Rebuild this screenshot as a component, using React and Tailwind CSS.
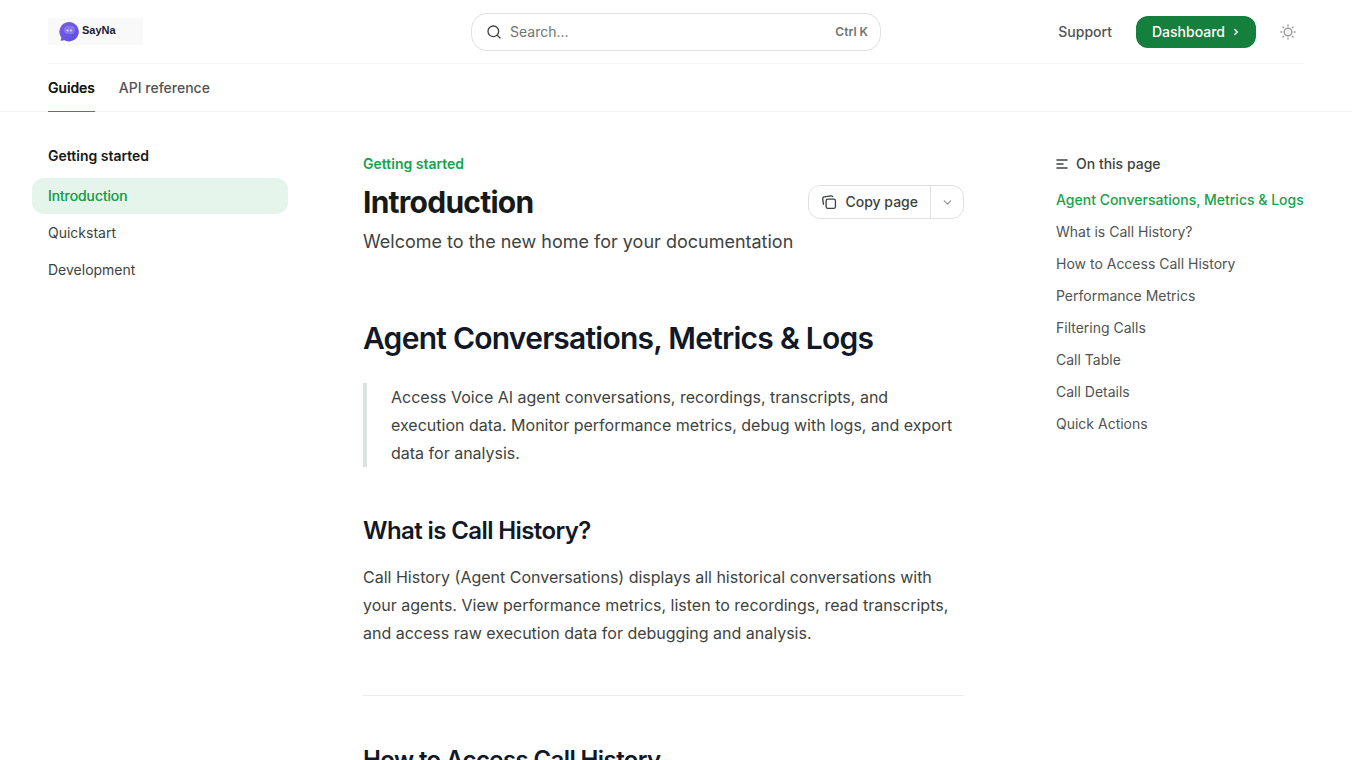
import { Search, ChevronDown } from "lucide-react";

const tabs = ["Guides", "API reference"];

const pages = ["Introduction", "Quickstart", "Development"];

const sections = [
  "Agent Conversations, Metrics & Logs",
  "What is Call History?",
  "How to Access Call History",
  "Performance Metrics",
  "Filtering Calls",
  "Call Table",
  "Call Details",
  "Quick Actions",
];

export default function App() {
  return (
    <div className="min-h-screen bg-white font-['Inter',sans-serif] text-[#3e4340]">
      <Header />

      <div className="flex px-12">
        <Sidebar />
        <Article />
        <OnThisPage />
      </div>
    </div>
  );
}

/* top bar + tabs */
function Header() {
  return (
    <header className="border-b border-[#f2f3f2] px-12">
      <div className="flex h-16 items-center border-b border-[#f4f5f4]">
        <div className="flex-1">
          <a href="/" className="inline-block align-middle">
            <Logo />
          </a>
        </div>

        <div className="flex h-[38px] w-[410px] items-center gap-2 rounded-2xl border border-[#dfe0df] pr-3 pl-[14px]">
          <Search className="size-4 text-[#3e4340]" aria-hidden="true" />
          <input
            type="text"
            aria-label="Search"
            placeholder="Search..."
            className="min-w-0 flex-1 text-sm outline-none placeholder:text-[#707472]"
          />
          <kbd className="font-['Inter',sans-serif] text-xs font-semibold text-[#707472]">
            Ctrl K
          </kbd>
        </div>

        <div className="flex flex-1 items-center justify-end gap-6">
          <a href="/support" className="text-sm font-medium text-[#505351]">
            Support
          </a>
          <a
            href="/dashboard"
            className="flex h-8 items-center gap-[7px] rounded-xl bg-[#15803d] px-4 text-sm font-medium text-white"
          >
            Dashboard
            <svg
              width="8"
              height="8"
              viewBox="0 0 8 8"
              fill="none"
              stroke="currentColor"
              strokeWidth="1.4"
              strokeLinecap="round"
              strokeLinejoin="round"
              aria-hidden="true"
            >
              <path d="M2.700 1.400 5.300 4 2.700 6.600" />
            </svg>
          </a>
          <button type="button" aria-label="Toggle dark mode" className="pr-2">
            <SunIcon />
          </button>
        </div>
      </div>

      <nav className="-mb-px flex h-12 gap-6 text-sm font-medium">
        {tabs.map((tab, i) => (
          <a
            key={tab}
            href="#"
            className={
              i === 0
                ? "flex items-center border-b border-b-[#16a34a] text-[#171a18] [text-shadow:0_0_0_currentColor]"
                : "flex items-center border-b border-b-transparent text-[#505351]"
            }
          >
            {tab}
          </a>
        ))}
      </nav>
    </header>
  );
}

function Sidebar() {
  return (
    <nav className="w-60 shrink-0 pt-[34px] text-sm">
      <h5 className="leading-5 font-semibold text-[#171a18]">
        Getting started
      </h5>
      <ul className="mt-3 -ml-4 space-y-px">
        {pages.map((page, i) => (
          <li key={page}>
            <a
              href="#"
              className={
                i === 0
                  ? "block rounded-xl bg-[#e6f5eb] px-4 py-2 text-[#16a34a] [text-shadow:0_0_0_currentColor]"
                  : "block rounded-xl px-4 py-2"
              }
            >
              {page}
            </a>
          </li>
        ))}
      </ul>
    </nav>
  );
}

function Article() {
  return (
    <main className="mr-[92px] ml-[75px] min-w-0 flex-1 pt-[42px] pb-16">
      <p className="text-sm font-semibold text-[#16a34a]">Getting started</p>
      <div className="mt-2.5 flex items-center">
        <h1 className="flex-1 text-3xl font-bold tracking-tight text-[#171a18]">
          Introduction
        </h1>
        <CopyPage />
      </div>
      <p className="mt-2 text-lg">
        Welcome to the new home for your documentation
      </p>

      <h1 className="mt-16 text-3xl font-semibold tracking-tight text-[#111827]">
        Agent Conversations, Metrics & Logs
      </h1>
      <blockquote className="mt-[27px] border-l-4 border-[#dce2df] pl-6 leading-7">
        Access Voice AI agent conversations, recordings, transcripts, and
        execution data. Monitor performance metrics, debug with logs, and export
        data for analysis.
      </blockquote>

      <h2 className="mt-12 text-2xl font-semibold tracking-tight text-[#111827]">
        What is Call History?
      </h2>
      <p className="mt-4 leading-7">
        Call History (Agent Conversations) displays all historical conversations
        with your agents. View performance metrics, listen to recordings, read
        transcripts, and access raw execution data for debugging and analysis.
      </p>

      <hr className="my-12 border-[#ebeceb]" />

      <h2 className="text-2xl font-semibold tracking-tight text-[#111827]">
        How to Access Call History
      </h2>
    </main>
  );
}

function CopyPage() {
  return (
    <div className="flex h-[34px] rounded-xl border border-[#dfe0df] text-sm font-medium">
      <button type="button" className="flex items-center gap-2 px-3">
        <CopyIcon />
        Copy page
      </button>
      <button
        type="button"
        aria-label="More actions"
        className="flex w-[33px] items-center justify-center border-l border-[#dfe0df]"
      >
        <ChevronDown className="size-[13px] text-[#8b8f8c]" />
      </button>
    </div>
  );
}

function OnThisPage() {
  return (
    <aside className="w-[248px] shrink-0 pt-[42px] text-sm">
      <h2 className="flex items-center gap-2 font-medium">
        <svg width="12" height="12" viewBox="0 0 12 12" aria-hidden="true">
          <path
            d="M1 2h10M1 6h6M1 10h10"
            stroke="currentColor"
            strokeWidth="1.5"
            strokeLinecap="round"
          />
        </svg>
        On this page
      </h2>
      <ul className="mt-4 space-y-3 whitespace-nowrap">
        {sections.map((section, i) => (
          <li key={section}>
            <a
              href="#"
              className={
                i === 0 ? "font-medium text-[#16a34a]" : "text-[#505351]"
              }
            >
              {section}
            </a>
          </li>
        ))}
      </ul>
    </aside>
  );
}

/* icons */

function Logo() {
  return (
    <svg
      width="95"
      height="27"
      viewBox="0 0 95 27"
      role="img"
      aria-label="SayNa"
    >
      <defs>
        <linearGradient id="bubble" x1="0" y1="0" x2="1" y2="1">
          <stop offset="0" stopColor="#7c5ce6" />
          <stop offset="1" stopColor="#5b50dc" />
        </linearGradient>
      </defs>
      <rect width="95" height="27" fill="#f9f9fa" />
      <path
        d="M21 4a9.700 9.700 0 1 1-4.600 18.200L12.600 22.800l.8-3.300A9.700 9.700 0 0 1 21 4Z"
        fill="url(#bubble)"
      />
      <rect x="16" y="8" width="11" height="8" rx="4" fill="#8578ea" />
      <circle cx="19.500" cy="12.500" r="1" fill="#e6e2ff" />
      <circle cx="22.800" cy="12.500" r="1" fill="#e6e2ff" />
      <text
        x="34"
        y="16"
        fontFamily="'Liberation Sans', Arial, sans-serif"
        fontSize="11"
        fontWeight="700"
        fill="#1c1b33"
      >
        SayNa
      </text>
    </svg>
  );
}

function SunIcon() {
  return (
    <svg
      width="16"
      height="16"
      viewBox="0 0 16 16"
      fill="none"
      stroke="#8f9290"
      strokeWidth="1.3"
      strokeLinecap="round"
    >
      <circle cx="8" cy="8" r="3.800" />
      <path d="M8 .9v1M8 14.100v1M.9 8h1M14.100 8h1M3 3l.6.6M12.400 12.400l.6.6M3 13l.6-.6M12.400 3.600l.6-.6" />
    </svg>
  );
}

function CopyIcon() {
  return (
    <svg
      width="16"
      height="16"
      viewBox="0 0 18 18"
      fill="none"
      stroke="currentColor"
      strokeWidth="1.5"
      strokeLinecap="round"
      strokeLinejoin="round"
      aria-hidden="true"
    >
      <rect x="5.750" y="5.750" width="10.500" height="10.500" rx="2" />
      <path d="M2.800 11.500 1.900 5.500A2 2 0 0 1 3.600 3.200l7.500-1.100a2 2 0 0 1 2 .9" />
    </svg>
  );
}
